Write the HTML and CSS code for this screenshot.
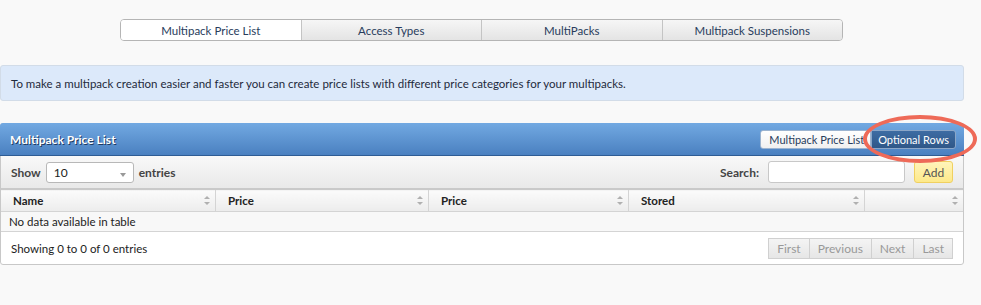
FILE: index.html
```html
<!DOCTYPE html>
<html>
<head>
<title>Multipack Price List</title>
<link rel="stylesheet" href="styles.css">
</head>
<body>
    <div class="page">
        <div class="tabs">
            <a class="tab active">Multipack Price List</a>
            <a class="tab">Access Types</a>
            <a class="tab">MultiPacks</a>
            <a class="tab">Multipack Suspensions</a>
        </div>

        <div class="info">To make a multipack creation easier and faster you can create price lists with different price categories for your multipacks.</div>

        <div class="panel">
            <div class="panel-head">
                <span class="panel-title">Multipack Price List</span>
                <div class="head-buttons">
                    <button class="hbtn">Multipack Price List</button>
                    <button class="hbtn selected">Optional Rows</button>
                    <span class="ring"></span>
                </div>
            </div>
            <div class="toolbar">
                <label class="length">Show
                    <span class="select">10<span class="caret"></span></span>
                    entries</label>
                <div class="search">
                    <label>Search:</label>
                    <span class="input"></span>
                    <button class="add">Add</button>
                </div>
            </div>
            <table class="grid">
                <thead>
                    <tr>
                        <th class="c1">Name<span class="sort"></span></th>
                        <th class="c2">Price<span class="sort"></span></th>
                        <th class="c3">Price<span class="sort"></span></th>
                        <th class="c4">Stored<span class="sort"></span></th>
                        <th class="c5"><span class="sort"></span></th>
                    </tr>
                </thead>
                <tbody>
                    <tr><td colspan="5">No data available in table</td></tr>
                </tbody>
            </table>
            <div class="footer">
                <span>Showing 0 to 0 of 0 entries</span>
                <div class="pager">
                    <span class="pbtn">First</span><span class="pbtn">Previous</span><span class="pbtn">Next</span><span class="pbtn">Last</span>
                </div>
            </div>
        </div>
    </div>
</body>
</html>
```

FILE: styles.css
```css
body {
    margin: 0;
    background-color: #f9f9f9;
    font-family: 'Lato', 'Noto Sans', sans-serif;
    font-size: 11.5px;
    color: #222;
}

.page {
    width: 964px;
}

.tabs {
    display: flex;
    margin: 19px 0 0 120px;
    width: 723px;
    height: 22px;
    border: 1px solid #b5b5b5;
    border-radius: 4px;
    overflow: hidden;
    box-sizing: border-box;
}

.tab {
    flex: 1;
    display: flex;
    align-items: center;
    justify-content: center;
    color: #283c5c;
    background: linear-gradient(#f6f6f6, #e4e4e4);
    border-left: 1px solid #c4c4c4;
}

.tab:first-child {
    border-left: none;
}

.tab.active {
    background: #ffffff;
}

.info {
    margin-top: 24px;
    height: 36px;
    box-sizing: border-box;
    padding: 0 10px;
    display: flex;
    align-items: center;
    background-color: #dce9fa;
    border: 1px solid #d2dce8;
    border-radius: 3px;
    color: #1e2a3c;
    font-size: 11.5px;
}

.panel {
    margin-top: 22px;
    border: 1px solid #c8c8c8;
    border-radius: 3px;
    background: #ffffff;
}

.panel-head {
    height: 32px;
    display: flex;
    align-items: center;
    justify-content: space-between;
    padding: 0 8px 0 10px;
    background: linear-gradient(#72a9e2, #4a80c0);
    border-bottom: 1px solid #2e5c94;
    border-radius: 3px 3px 0 0;
    margin: -1px -1px 0 -1px;
}

.panel-title {
    color: #ffffff;
    font-weight: bold;
    font-size: 12px;
    text-shadow: 1px 1px 0 #1e3a60;
}

.head-buttons {
    display: flex;
    position: relative;
    margin-top: 1px;
}

.hbtn {
    font-family: inherit;
    font-size: 11px;
    height: 19px;
    padding: 0 6px 0 8px;
    border: 1px solid #9cb4d0;
    background: linear-gradient(#ffffff, #f0f0f0);
    color: #283c5c;
    border-radius: 3px 0 0 3px;
}

.hbtn.selected {
    background: linear-gradient(#3d6ca3, #2f5788);
    color: #ffffff;
    border-color: #8aa6c8;
    border-radius: 0 3px 3px 0;
    padding: 0 6px;
}

.ring {
    position: absolute;
    right: -21px;
    top: -15px;
    width: 106px;
    height: 40px;
    border: 4px solid #ee6a58;
    border-radius: 50%;
}

.toolbar {
    height: 32px;
    display: flex;
    align-items: center;
    justify-content: space-between;
    padding: 0 10px;
    background: linear-gradient(#f9f9f9, #e9e9e9);
    border-bottom: 1px solid #c9c9c9;
    font-weight: bold;
    font-size: 12px;
    color: #444;
}

.length {
    display: flex;
    align-items: center;
    gap: 5px;
}

.select {
    position: relative;
    width: 88px;
    height: 21px;
    box-sizing: border-box;
    border: 1px solid #b8b8b8;
    border-radius: 3px;
    background: #ffffff;
    font-weight: normal;
    color: #222;
    display: flex;
    align-items: center;
    padding-left: 7px;
}

.caret {
    position: absolute;
    right: 7px;
    top: 10px;
    border-left: 3px solid transparent;
    border-right: 3px solid transparent;
    border-top: 4px solid #999;
}

.search {
    display: flex;
    align-items: center;
}

.search label {
    margin-right: 9px;
}

.input {
    width: 137px;
    height: 22px;
    box-sizing: border-box;
    border: 1px solid #c8c8c8;
    border-radius: 3px;
    background: #ffffff;
}

.add {
    margin-left: 9px;
    width: 39px;
    height: 22px;
    font-family: inherit;
    font-size: 12px;
    color: #555;
    background: linear-gradient(#fff4bb, #fde98a);
    border: 1px solid #f0d060;
    border-radius: 3px;
}

.grid {
    width: 100%;
    border-collapse: collapse;
}

.grid th {
    position: relative;
    height: 21px;
    padding: 0 12px;
    text-align: left;
    font-weight: bold;
    color: #222;
    background: linear-gradient(#fbfbfb, #ececec);
    border-top: 1px solid #c9c9c9;
    border-bottom: 1px solid #d4d4d4;
    border-left: 1px solid #d4d4d4;
}

.grid th:first-child {
    border-left: none;
}

.c1 { width: 190px; }
.c2 { width: 188px; }
.c3 { width: 175px; }
.c4 { width: 211px; }

.sort {
    position: absolute;
    right: 5px;
    top: 6px;
    width: 6px;
    height: 9px;
}

.sort::before,
.sort::after {
    content: "";
    position: absolute;
    left: 0;
    border-left: 3px solid transparent;
    border-right: 3px solid transparent;
}

.sort::before {
    top: 0;
    border-bottom: 3px solid #b0b0b0;
}

.sort::after {
    bottom: 0;
    border-top: 3px solid #b0b0b0;
}

.grid td {
    height: 19px;
    padding: 0 8px;
    background: #f8f8f8;
    border-bottom: 1px solid #d4d4d4;
    color: #222;
}

.footer {
    height: 32px;
    display: flex;
    align-items: center;
    justify-content: space-between;
    padding: 0 10px;
    color: #222;
}

.pager {
    display: flex;
}

.pbtn {
    display: flex;
    align-items: center;
    height: 19px;
    padding: 0 8px;
    font-size: 12px;
    color: #999;
    background: linear-gradient(#f4f4f4, #e6e6e6);
    border: 1px solid #d0d0d0;
    margin-left: -1px;
}
```
